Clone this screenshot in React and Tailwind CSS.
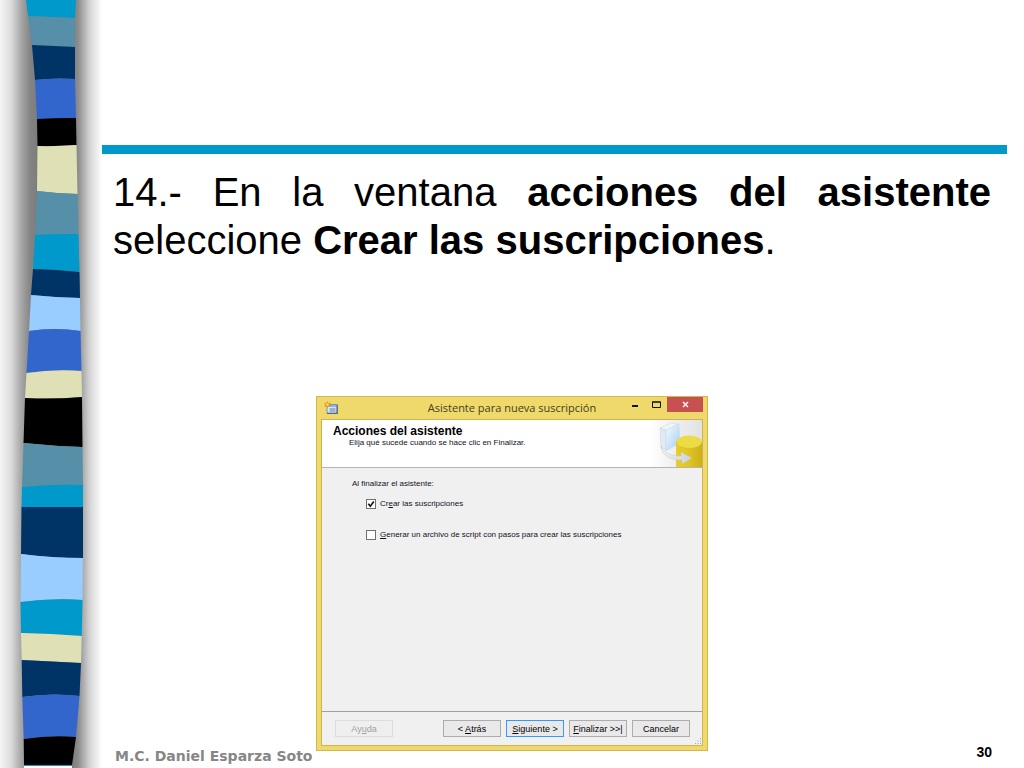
import React from 'react';

// Each band: colour, [left x, left y], [right x, right y] of its top edge and the bend in the middle
const bands = [
  { color: '#0099cc', left: [26, 0], right: [76, 0], bend: 0 },
  { color: '#5590a8', left: [28, 16], right: [75, 18], bend: 0 },
  { color: '#003366', left: [32, 45], right: [75, 47], bend: 0 },
  { color: '#3366cc', left: [35, 80], right: [75, 79], bend: -2 },
  { color: '#000000', left: [37, 119], right: [76, 118], bend: -1 },
  { color: '#dfe0b6', left: [37.5, 146], right: [76.5, 145], bend: 1 },
  { color: '#5590a8', left: [37, 191], right: [77.5, 194], bend: 1 },
  { color: '#0099cc', left: [35, 235], right: [78.5, 234], bend: -1 },
  { color: '#003366', left: [33, 269], right: [79.5, 272], bend: -1 },
  { color: '#99ccff', left: [31, 295], right: [80, 298], bend: 1 },
  { color: '#3366cc', left: [29, 331], right: [80.5, 331], bend: -4 },
  { color: '#dfe0b6', left: [26.5, 373], right: [81.5, 371], bend: -3 },
  { color: '#000000', left: [25, 398], right: [82, 397], bend: 2 },
  { color: '#5590a8', left: [23.5, 443], right: [82.5, 447], bend: 1 },
  { color: '#0099cc', left: [22, 487], right: [83, 485], bend: -2 },
  { color: '#003366', left: [21.5, 507], right: [83, 507], bend: 0 },
  { color: '#99ccff', left: [21, 554], right: [83, 558], bend: 2 },
  { color: '#0099cc', left: [20.5, 602], right: [82.5, 600], bend: -3 },
  { color: '#dfe0b6', left: [21, 633], right: [81.7, 636], bend: -1 },
  { color: '#003366', left: [21.7, 660], right: [81, 663], bend: 0 },
  { color: '#3366cc', left: [22.3, 697], right: [79.5, 696], bend: -4 },
  { color: '#000000', left: [23.7, 739], right: [76, 737], bend: -3 },
  { color: '#ffffff', left: [24, 765], right: [72, 765], bend: 0 },
];

const bandPath = (band, next) => {
  const [lx, ly] = band.left;
  const [rx, ry] = band.right;
  const [nlx, nly] = next ? next.left : [24, 768];
  const [nrx, nry] = next ? next.right : [72, 768];
  const nextBend = next ? next.bend : 0;
  return `M${lx} ${ly}Q${(lx + rx) / 2} ${(ly + ry) / 2 + band.bend} ${rx} ${ry}L${nrx} ${nry}Q${(nlx + nrx) / 2} ${(nly + nry) / 2 + nextBend} ${nlx} ${nly}Z`;
};

const Ribbon = () => (
  <svg className="block h-full w-full" viewBox="0 0 102 768" preserveAspectRatio="none" aria-hidden="true">
    <defs>
      <linearGradient id="shadowLeft" x1="0" x2="38" y1="0" y2="0" gradientUnits="userSpaceOnUse">
        <stop offset="0" stopColor="#f6f6f6" />
        <stop offset="0.3" stopColor="#dadada" />
        <stop offset="0.55" stopColor="#a8a8a8" />
        <stop offset="0.8" stopColor="#848484" />
        <stop offset="1" stopColor="#7c7c7c" />
      </linearGradient>
      <linearGradient id="shadowRight" x1="72" x2="102" y1="0" y2="0" gradientUnits="userSpaceOnUse">
        <stop offset="0" stopColor="#7c7c7c" />
        <stop offset="0.2" stopColor="#8c8c8c" />
        <stop offset="0.6" stopColor="#d6d6d6" />
        <stop offset="1" stopColor="#ffffff" />
      </linearGradient>
    </defs>
    <rect width="50" height="768" fill="url(#shadowLeft)" />
    <rect x="50" width="52" height="768" fill="url(#shadowRight)" />
    {bands.map((band, i) => (
      <path key={i} d={bandPath(band, bands[i + 1])} fill={band.color} />
    ))}
    <path d="M24 765.5H72" stroke="#0099cc" />
  </svg>
);

const WizardIcon = () => (
  <svg className="h-[14px] w-[14px]" viewBox="0 0 14 14" aria-hidden="true">
    <rect x="3" y="3.5" width="10" height="8.500" fill="#dbe7f5" stroke="#7d93ad" />
    <rect x="3.500" y="4" width="9" height="2" fill="#8fb3dc" />
    <path d="M5.500 8h6M5.500 10h6" stroke="#5c7ca6" />
    <path d="M13.200 4v8.500H3" fill="none" stroke="#4f6687" strokeWidth="1.200" />
    <path d="M3.500 0l1 2.300L7 1.500 5.600 3.500 7 5.500 4.500 5 3.500 7 2.500 5 0 5.500 1.400 3.500 0 1.500l2.500.8z" fill="#f08c12" />
    <circle cx="3.500" cy="3.500" r="1.300" fill="#ffe56a" />
  </svg>
);

const BannerArt = () => (
  <svg className="block h-[47px] w-[52px]" viewBox="0 0 52 47" aria-hidden="true">
    <defs>
      <linearGradient id="bannerBack" x1="0" x2="1">
        <stop offset="0" stopColor="#ffffff" />
        <stop offset="0.5" stopColor="#eeeeee" />
        <stop offset="1" stopColor="#e2e2e2" />
      </linearGradient>
      <linearGradient id="book" x1="0" x2="1" y1="0" y2="1">
        <stop offset="0" stopColor="#f5faff" />
        <stop offset="0.6" stopColor="#c3e0f8" />
        <stop offset="1" stopColor="#a4cdf0" />
      </linearGradient>
      <linearGradient id="drum" x1="0" x2="1">
        <stop offset="0" stopColor="#e6cf2c" />
        <stop offset="0.5" stopColor="#dfc51f" />
        <stop offset="1" stopColor="#cbb01c" />
      </linearGradient>
      <linearGradient id="arrow" x1="0" x2="1">
        <stop offset="0" stopColor="#f0f1f4" />
        <stop offset="1" stopColor="#cfd1d4" />
      </linearGradient>
    </defs>
    <rect width="52" height="47" fill="url(#bannerBack)" />
    <path d="M10 8L21 3l7 1-11 6z" fill="#f2f5f7" stroke="#d2dae0" strokeWidth="0.6" />
    <path d="M10 8l6 3v19l-5-3z" fill="#e0ebf3" stroke="#c9d5e0" strokeWidth="0.6" />
    <path d="M16 10L29 4l1 19-14 8z" fill="url(#book)" stroke="#c4dbed" strokeWidth="0.6" />
    <path d="M26 22v25h26V22z" fill="url(#drum)" />
    <ellipse cx="39" cy="22" rx="13" ry="6.500" fill="#ecdb45" />
    <path d="M26 22a13 6.500 0 0 0 26 0" fill="none" stroke="#d2ba2c" strokeWidth="0.7" />
    <path d="M11 26c3 7 10 10 20 10v-4l11 6-10 6v-4c-12 0-20-4-21-14z" fill="url(#arrow)" stroke="#bfc1c5" strokeWidth="0.4" />
  </svg>
);

const WizardButton = ({ children, className = 'border-[#acacac] bg-[#e9e9e9] text-black', ...props }) => (
  <button
    type="button"
    className={`h-[17px] w-[58px] border text-center text-[9px] leading-[14px] whitespace-nowrap ${className}`}
    {...props}
  >
    {children}
  </button>
);

const WizardDialog = () => (
  <section
    aria-label="Asistente para nueva suscripción"
    className="mb-[17px] flex h-[355px] flex-col border border-[#d2b650] bg-[#efd96b] px-1 pb-1 text-[#10101c]"
  >
    <header className="flex h-[22px] shrink-0 items-start">
      <div className="w-[78px] pt-1 pl-[3px]">
        <WizardIcon />
      </div>
      <h2 className="flex-1 pt-[3px] text-center font-['Open_Sans',sans-serif] text-[11px] leading-4 whitespace-nowrap text-[#45401f]">
        Asistente para nueva suscripción
      </h2>
      <button type="button" aria-label="Minimizar" className="flex h-[15px] w-5 items-center justify-center">
        <svg width="6" height="6" viewBox="0 0 6 6"><path d="M0 4h6" stroke="#111" strokeWidth="2" /></svg>
      </button>
      <button type="button" aria-label="Maximizar" className="flex h-[15px] w-[22px] items-center justify-center">
        <svg width="9" height="7" viewBox="0 0 9 7"><path d="M.5 1h8v5.500h-8zM0 1h9" fill="none" stroke="#111" /></svg>
      </button>
      <button type="button" aria-label="Cerrar" className="flex h-[15px] w-[36px] items-center justify-center bg-[#c75050]">
        <svg width="7" height="7" viewBox="0 0 7 7"><path d="M1 1l5 5M6 1L1 6" stroke="#fff" strokeWidth="1.400" /></svg>
      </button>
    </header>

    <div className="flex flex-1 flex-col border border-[#cdb353] bg-[#f0f0f0]">
      <div className="flex justify-between border-b border-[#b4b4b4] bg-white">
        <div className="pt-[5px] pl-[11px]">
          <h3 className="text-[12px] leading-[13px] font-bold whitespace-nowrap text-black">Acciones del asistente</h3>
          <p className="pl-4 text-[8px] leading-[10px] whitespace-nowrap">Elija qué sucede cuando se hace clic en Finalizar.</p>
        </div>
        <BannerArt />
      </div>

      <div className="flex flex-1 flex-col pt-[10px] pl-[30px] text-[8px]">
        <p className="leading-3">Al finalizar el asistente:</p>
        <label className="mt-2 ml-[14px] flex items-center gap-1 leading-3">
          <span className="relative flex">
            <input type="checkbox" defaultChecked className="peer h-[10px] w-[10px] appearance-none border border-[#707070] bg-white" />
            <svg className="pointer-events-none absolute inset-0 hidden h-[10px] w-[10px] peer-checked:block" viewBox="0 0 10 10">
              <path d="M2.300 4.800l2 2.400L7.800 2.500" fill="none" stroke="#111" strokeWidth="1.600" />
            </svg>
          </span>
          <span>Cr<u>e</u>ar las suscripciones</span>
        </label>
        <label className="mt-[19px] ml-[14px] flex items-center gap-1 leading-3">
          <input type="checkbox" className="h-[10px] w-[10px] appearance-none border border-[#707070] bg-white" />
          <span><u>G</u>enerar un archivo de script con pasos para crear las suscripciones</span>
        </label>
      </div>

      <footer className="flex h-[34px] items-start border-t border-[#a0a0a0] pt-2 pr-3 pl-[13px]">
        <WizardButton disabled className="border-[#dcdcdc] bg-[#efefef] text-[#a0a0a0]">Ay<u>u</u>da</WizardButton>
        <div className="ml-auto flex gap-[5px]">
          <WizardButton>&lt; <u>A</u>trás</WizardButton>
          <WizardButton className="border-[#3399ff] bg-[#e9e9e9] text-black"><u>S</u>iguiente &gt;</WizardButton>
          <WizardButton><u>F</u>inalizar &gt;&gt;|</WizardButton>
          <WizardButton>Cancelar</WizardButton>
        </div>
        <svg className="-mr-3 ml-[5px] h-[7px] w-[7px] self-end" viewBox="0 0 7 7" aria-hidden="true">
          <path d="M5 0h1v1H5zM5 2.500h1v1H5zM2.500 2.500h1v1h-1zM0 5h1v1H0zM2.500 5h1v1h-1zM5 5h1v1H5z" fill="#a0a4b4" />
        </svg>
      </footer>
    </div>
  </section>
);

const App = () => {
  return (
    <div className="flex min-h-screen bg-white font-['Liberation_Sans',Arial,sans-serif] text-black">
      <aside className="w-[102px] shrink-0">
        <Ribbon />
      </aside>

      <main className="flex min-w-0 flex-1 flex-col pt-[145px] pr-[17px]">
        <hr className="h-[9px] shrink-0 border-0 bg-[#0099cc]" />
        <p className="pt-[14px] pr-4 pl-[11px] text-justify text-[40px] leading-[48px]">
          14.- En la ventana <b>acciones del asistente</b> seleccione <b>Crear las suscripciones</b>.
        </p>

        <div className="mt-auto grid grid-cols-[201px_392px_1fr] items-end pl-[13px]">
          <p className="pb-1 font-['DejaVu_Sans',Verdana,sans-serif] text-[14px] leading-4 font-bold whitespace-nowrap text-[#868686]">
            M.C. Daniel Esparza Soto
          </p>
          <WizardDialog />
          <p className="pr-[15px] pb-2 text-right text-[14px] leading-4 font-bold">30</p>
        </div>
      </main>
    </div>
  );
};

export default App;
